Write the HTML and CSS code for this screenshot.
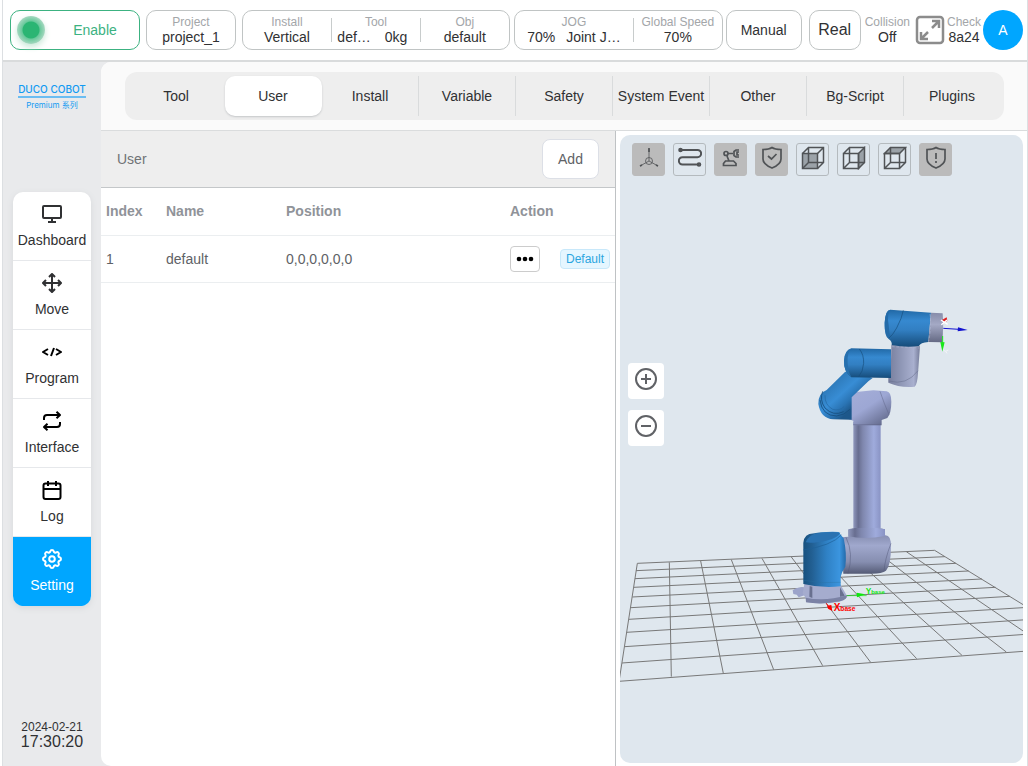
FILE: index.html
```html
<!DOCTYPE html>
<html lang="en">
<head>
  <meta charset="UTF-8">
  <title>DUCO COBOT</title>
  <link rel="stylesheet" href="styles.css">
</head>
<body>

<div class="app">
  <!-- Status bar -->
  <header class="topbar">
    <div class="group wide">
      <button type="button" class="box enable"><span class="lamp"></span><span class="enable-text">Enable</span></button>
      <div class="box project">
        <div class="cell"><span class="label">Project</span><span class="value">project_1</span></div>
      </div>
      <div class="box install">
        <div class="cell"><span class="label">Install</span><span class="value">Vertical</span></div>
        <div class="cell"><span class="label">Tool</span><span class="value pair"><span>def…</span><span>0kg</span></span></div>
        <div class="cell"><span class="label">Obj</span><span class="value">default</span></div>
      </div>
    </div>
    <div class="group jog-group">
      <div class="box jog">
        <div class="cell speed"><span class="label">JOG</span><span class="value pair"><span>70%</span><span>Joint J…</span></span></div>
        <div class="cell"><span class="label">Global Speed</span><span class="value">70%</span></div>
      </div>
      <button type="button" class="box manual">Manual</button>
    </div>
    <div class="group tail">
      <button type="button" class="box real">Real</button>
      <div class="cell plain"><span class="label">Collision</span><span class="value">Off</span></div>
      <button type="button" class="fullscreen" aria-label="Fullscreen">
        <svg width="30" height="30" viewBox="0 0 30 30" fill="none" stroke="#8c8c8c" stroke-width="2.500">
          <rect x="2" y="2" width="26" height="26" rx="3"/>
          <path d="M17 6h7v7M24 6l-7 7M6 17v7h7M6 24l7-7"/>
        </svg>
      </button>
      <div class="cell plain"><span class="label">Check</span><span class="value">8a24</span></div>
      <button type="button" class="avatar">A</button>
    </div>
  </header>

  <div class="body">
    <!-- Sidebar -->
    <aside class="sidebar">
      <div class="logo">
        <span class="brand">DUCO COBOT</span>
        <span class="series">Premium 系列</span>
      </div>
      <nav class="menu">
        <a href="#dashboard" class="menu-item">
          <svg class="icon" viewBox="0 0 20 20"><rect x="1" y="2" width="18" height="12" rx="1"/><path d="M10 14v4M6 18h8"/></svg>
          <span>Dashboard</span>
        </a>
        <a href="#move" class="menu-item">
          <svg class="icon" viewBox="0 0 20 20"><path d="M10 1v18M1 10h18M7 4l3-3 3 3M7 16l3 3 3-3M4 7l-3 3 3 3M16 7l3 3-3 3"/></svg>
          <span>Move</span>
        </a>
        <a href="#program" class="menu-item">
          <svg class="icon dark" viewBox="0 0 20 20"><path d="M6 7l-5 3 5 3M14 7l5 3-5 3M12 6l-3 8"/></svg>
          <span>Program</span>
        </a>
        <a href="#interface" class="menu-item">
          <svg class="icon dark" viewBox="0 0 20 20"><path d="M2 9V7a3 3 0 0 1 3-3h13M14.500 .8L18 4l-3.500 3.200M18 11v2a3 3 0 0 1-3 3H2M5.500 12.800L2 16l3.500 3.200"/></svg>
          <span>Interface</span>
        </a>
        <a href="#log" class="menu-item">
          <svg class="icon dark" viewBox="0 0 20 20"><rect x="1.500" y="3.500" width="17" height="15.500" rx="2"/><path d="M2 9h16M6 1v5M14 1v5"/></svg>
          <span>Log</span>
        </a>
        <a href="#setting" class="menu-item active">
          <svg class="icon" viewBox="2 2 20 20"><circle cx="12" cy="12" r="2.800"/><path d="M10.325 4.317c.426-1.756 2.924-1.756 3.350 0a1.724 1.724 0 0 0 2.573 1.066c1.543-.94 3.310.826 2.370 2.370a1.724 1.724 0 0 0 1.065 2.572c1.756.426 1.756 2.924 0 3.350a1.724 1.724 0 0 0-1.066 2.573c.94 1.543-.826 3.310-2.370 2.370a1.724 1.724 0 0 0-2.572 1.065c-.426 1.756-2.924 1.756-3.350 0a1.724 1.724 0 0 0-2.573-1.066c-1.543.94-3.310-.826-2.370-2.370a1.724 1.724 0 0 0-1.065-2.572c-1.756-.426-1.756-2.924 0-3.350a1.724 1.724 0 0 0 1.066-2.573c-.94-1.543.826-3.310 2.370-2.370 1 .608 2.296.07 2.572-1.065z"/></svg>
          <span>Setting</span>
        </a>
      </nav>
      <div class="clock">
        <span class="date">2024-02-21</span>
        <span class="time">17:30:20</span>
      </div>
    </aside>

    <main class="main">
      <div class="tabbar">
        <nav class="tabs">
          <a href="#tool" class="tab">Tool</a>
          <a href="#user" class="tab active">User</a>
          <a href="#install" class="tab">Install</a>
          <a href="#variable" class="tab">Variable</a>
          <a href="#safety" class="tab">Safety</a>
          <a href="#system-event" class="tab">System Event</a>
          <a href="#other" class="tab">Other</a>
          <a href="#bg-script" class="tab">Bg-Script</a>
          <a href="#plugins" class="tab">Plugins</a>
        </nav>
      </div>

      <div class="panels">
        <!-- User frames -->
        <section class="list-panel">
          <div class="panel-head">
            <span>User</span>
            <button type="button" class="add-btn">Add</button>
          </div>
          <table class="frames">
            <thead>
              <tr>
                <th class="col-index">Index</th>
                <th class="col-name">Name</th>
                <th>Position</th>
                <th class="col-action">Action</th>
              </tr>
            </thead>
            <tbody>
              <tr>
                <td>1</td>
                <td>default</td>
                <td>0,0,0,0,0,0</td>
                <td>
                  <div class="actions">
                    <button type="button" class="more-btn" aria-label="More">
                      <svg width="18" height="6" viewBox="0 0 18 6"><circle cx="3" cy="3" r="2.300"/><circle cx="9" cy="3" r="2.300"/><circle cx="15" cy="3" r="2.300"/></svg>
                    </button>
                    <span class="tag">Default</span>
                  </div>
                </td>
              </tr>
            </tbody>
          </table>
        </section>

        <!-- 3D view -->
        <section class="view-panel">
          <div class="scene">
            <svg class="robot" viewBox="0 0 403 628" preserveAspectRatio="xMidYMid slice">
              <defs>
                <linearGradient id="post"><stop offset="0" stop-color="#9098bd"/><stop offset=".18" stop-color="#686e90"/><stop offset=".35" stop-color="#7f87ae"/><stop offset=".75" stop-color="#9fabdc"/><stop offset="1" stop-color="#8993c4"/></linearGradient>
                <linearGradient id="elbow" x2=".8" y2="1"><stop offset="0" stop-color="#a5aed8"/><stop offset=".5" stop-color="#9da7d4"/><stop offset="1" stop-color="#636a8c"/></linearGradient>
                <linearGradient id="shoulder" x2="0" y2="1"><stop offset="0" stop-color="#737a9d"/><stop offset=".4" stop-color="#a0a8cd"/><stop offset=".75" stop-color="#868eb0"/><stop offset="1" stop-color="#555b76"/></linearGradient>
                <linearGradient id="wrist"><stop offset="0" stop-color="#777e9d"/><stop offset=".4" stop-color="#8f97b6"/><stop offset=".8" stop-color="#a9b0cf"/><stop offset="1" stop-color="#757c99"/></linearGradient>
                <linearGradient id="flange" x2="0" y2="1"><stop offset="0" stop-color="#878ca9"/><stop offset=".4" stop-color="#a4a9c5"/><stop offset="1" stop-color="#646983"/></linearGradient>
                <linearGradient id="blueDown" x2="0" y2="1"><stop offset="0" stop-color="#2168a5"/><stop offset=".3" stop-color="#3689d0"/><stop offset=".55" stop-color="#327fc2"/><stop offset="1" stop-color="#164c7a"/></linearGradient>
                <linearGradient id="blueAcross"><stop offset="0" stop-color="#17517f"/><stop offset=".2" stop-color="#225f92"/><stop offset=".55" stop-color="#2f81c5"/><stop offset=".85" stop-color="#3b95df"/><stop offset="1" stop-color="#236bab"/></linearGradient>
                <linearGradient id="link" x1=".2" y1=".3" x2=".65" y2=".75"><stop offset="0" stop-color="#2d79b9"/><stop offset=".45" stop-color="#388dd5"/><stop offset=".75" stop-color="#2a74b4"/><stop offset="1" stop-color="#1d578a"/></linearGradient>
              </defs>

              <!-- floor -->
              <g transform="translate(-20 395) scale(.3333)" fill="none" stroke="#777" stroke-width="3">
                <path d="M112 100L57 455M208 97L214 440M302 93L370 430M394 89L521 419M486 85L668 407M574 81L812 397M663 77L950 386M750 73L1086 376M835 69L1219 366M919 65L1349 357M1004 61L1473 349"/>
                <path d="M112 100L1004 61M108 122L1035 80M105 146L1068 100M102 172L1106 123M97 201L1146 147M93 233L1187 172M87 268L1230 199M80 307L1285 232M75 350L1340 265M66 399L1404 304M57 454L1473 349"/>
              </g>

              <g transform="translate(160 155) scale(.3333)">
                <!-- base and shoulder -->
                <g transform="translate(0 480)">
                  <path d="M185 262L205 260V239Q258 223 315 238V256Q334 255 333 290Q333 345 318 362Q305 372 270 371L190 371Z" fill="url(#shoulder)"/>
                  <path d="M205 238Q258 223 315 238V258Q255 270 205 259Z" fill="url(#post)"/>
                  <path d="M198 262Q222 310 204 371M333 280Q314 330 312 364" fill="none" stroke="#555c7b" stroke-width="1.500"/>
                  <path d="M38 421L48 415 66 411 78 414V434L56 442 50 434 40 432Z" fill="#9ca4ca"/>
                  <path d="M73 402L68 430 78 446V456Q125 465 178 455Q204 446 200 436L180 402Z" fill="#a5acce"/>
                  <path d="M77 443Q135 455 200 436Q204 448 180 454Q125 465 78 457Z" fill="#7b82a5"/>
                  <path d="M89 408L88 440 97 444V410ZM180 412V440L194 437Z" fill="#69708f"/>
                  <path d="M70 295Q67 258 88 252Q130 244 176 246Q185 258 191 265Q201 310 196 350Q185 366 182 380V409Q130 416 70 402Z" fill="url(#blueAcross)"/>
                  <path d="M77 277Q88 252 116 250Q160 243 181 248Q174 264 138 272Q98 281 77 277Z" fill="#2a72b1"/>
                  <path d="M70 300Q155 287 184 255" fill="none" stroke="#1d5f97" stroke-width="2"/>
                  <path d="M70 391Q125 402 182 397" fill="none" stroke="#2c6f9f" stroke-width="1"/>
                </g>
                <rect x="220" y="396" width="82" height="318" fill="url(#post)"/>
                <!-- elbow -->
                <path d="M206 308L280 301 320 304Q334 306 334 335Q334 370 322 384L305 390V406H220V392L206 388Z" fill="url(#elbow)"/>
                <path d="M220 404H303M300 304Q312 340 327 374" fill="none" stroke="#5f6687" stroke-width="1.500"/>
                <!-- forearm -->
                <path d="M195 246L140 300Q114 310 115 342Q122 386 160 388L215 389V322L265 274 278 264 214 240Z" fill="url(#link)"/>
                <path d="M120 330Q126 378 170 378Q193 376 210 358M128 304Q118 330 135 354Q160 380 191 365" fill="none" stroke="#174e7d" stroke-width="2.500"/>
                <path d="M135 316Q134 345 158 358Q178 364 192 350" fill="none" stroke="#2367a0" stroke-width="2"/>
                <!-- wrist -->
                <path d="M334 165L420 169 414 250Q412 285 404 290Q360 294 325 278V262H332Z" fill="url(#wrist)"/>
                <path d="M326 273Q380 288 414 242" fill="none" stroke="#646b89" stroke-width="1.500"/>
                <path d="M214 175L333 178V264L214 262Q191 245 192 212Q194 180 214 175Z" fill="url(#blueDown)"/>
                <path d="M214 176Q200 188 203 220Q205 248 214 261Q191 247 192 212Q194 180 214 176Z" fill="#2770ae"/>
                <path d="M238 177Q252 194 251 220Q249 246 236 260" fill="none" stroke="#174e7d" stroke-width="2"/>
                <path d="M331 59L453 68 445 156Q421 158 417 168Q376 173 335 165Q337 154 326 147Q313 139 314 98Q316 60 331 59Z" fill="url(#blueDown)"/>
                <path d="M331 59Q320 70 326 106Q327 130 333 148Q313 142 314 98Q316 60 331 59Z" fill="#246ba8"/>
                <path d="M370 61Q366 84 350 114 338 136 327 144" fill="none" stroke="#174e7d" stroke-width="2"/>
                <path d="M453 68L488 70Q492 112 486 157L445 156Z" fill="url(#flange)"/>
                <path d="M336 170L419 174M450 72Q455 110 446 154" fill="none" stroke="#b3bad7" stroke-width="1.500" stroke-dasharray="8 5"/>
                <!-- tool axes -->
                <path d="M490 115L537 118" stroke="#1212cf" stroke-width="3"/>
                <path d="M534 112L563 120 533 124Z" fill="#1212cf"/>
                <path d="M488 138V160" stroke="#18e818" stroke-width="3"/>
                <path d="M481 156L494 157 487 185Z" fill="#18e818"/>
                <path d="M487 89L500 82 502 92 493 99Z" fill="#e02020"/>
                <path d="M483 90L503 103M501 90L484 104" stroke="#fff" stroke-width="4"/>
                <path d="M491 181L497 184 505 180M497 184L501 190" stroke="#f3f5f7" stroke-width="3" fill="none"/>
                <!-- base axes -->
                <path d="M200 917H260" stroke="#0ee80e" stroke-width="2"/>
                <path d="M230 908L256 913 231 922Z" fill="#0ee80e"/>
                <path d="M139 940L145 949" stroke="#f00" stroke-width="3"/>
                <path d="M141 947L154 945 157 963 144 956Z" fill="#f00"/>
                <text class="axis" x="257" y="911" fill="#0ee80e" font-size="25">Y<tspan font-size="18">base</tspan></text>
                <text class="axis" x="161" y="964" fill="#f00" font-size="30">X<tspan font-size="20">base</tspan></text>
              </g>
            </svg>

            <div class="toolbar">
              <button type="button" class="tool on" aria-label="Axes">
                <svg viewBox="0 0 24 24" stroke-width=".8"><circle cx="12" cy="15" r="3.500"/><path d="M12 3v12l-9 5M12 15l9 5"/><path d="M12 2v4M3 20l2-1.100M21 20l-2-1.100" stroke-width="1.700"/></svg>
              </button>
              <button type="button" class="tool" aria-label="Path">
                <svg viewBox="0 0 24 24" stroke-width="2"><path d="M2 4h17.500a3.600 3.600 0 0 1 0 7.200H4.500a3.600 3.600 0 0 0 0 7.300H21"/><circle cx="2.500" cy="4" r="1.300"/><circle cx="21" cy="18.500" r="1.300"/></svg>
              </button>
              <button type="button" class="tool on" aria-label="Robot">
                <svg viewBox="0 0 24 24" stroke-width="1.700"><circle cx="7" cy="7.500" r="2"/><path d="M9 7.500h5M8 10l2 5M4.500 19.500v-2l2-2.500h8l2.500 2.500v2zM20 4h-3l-2 1.500v4L17 11h3M20 6h-2v3h2"/></svg>
              </button>
              <button type="button" class="tool on" aria-label="Safety">
                <svg viewBox="0 0 24 24" stroke-width="1.700"><path d="M12 1.500c3 2 6 2 9 2V13c0 4-4 7-9 9-5-2-9-5-9-9V3.500c3 0 6 0 9-2zM8 10l3.500 3L16.500 8"/></svg>
              </button>
              <button type="button" class="tool" aria-label="Front view">
                <svg viewBox="0 0 24 24" stroke-width="1.500"><path d="M1.500 7.500h15v15h-15z" fill="#9ba2a8"/><path d="M1.500 7.500l6-6h15v15l-6 6M16.500 7.500l6-6M7.500 1.500v15h15M1.500 22.500l6-6"/></svg>
              </button>
              <button type="button" class="tool" aria-label="Side view">
                <svg viewBox="0 0 24 24" stroke-width="1.500"><path d="M16.500 7.500l6-6v15l-6 6z" fill="#9ba2a8"/><path d="M1.500 7.500h15v15h-15zl6-6h15M7.500 1.500v15h15M1.500 22.500l6-6"/></svg>
              </button>
              <button type="button" class="tool" aria-label="Top view">
                <svg viewBox="0 0 24 24" stroke-width="1.500"><path d="M1.500 7.500l6-6h15l-6 6z" fill="#9ba2a8"/><path d="M1.500 7.500h15v15h-15zM22.500 1.500v15l-6 6M7.500 1.500v15h15M1.500 22.500l6-6"/></svg>
              </button>
              <button type="button" class="tool on" aria-label="Warning">
                <svg viewBox="0 0 24 24" stroke-width="1.700"><path d="M12 1.500c3 2 6 2 9 2V13c0 4-4 7-9 9-5-2-9-5-9-9V3.500c3 0 6 0 9-2zM12 7v6M12 15v2"/></svg>
              </button>
            </div>

            <div class="zoom">
              <button type="button" aria-label="Zoom in">
                <svg viewBox="0 0 24 24"><circle cx="12" cy="12" r="10"/><path d="M12 7v10M7 12h10"/></svg>
              </button>
              <button type="button" aria-label="Zoom out">
                <svg viewBox="0 0 24 24"><circle cx="12" cy="12" r="10"/><path d="M7 12h10"/></svg>
              </button>
            </div>
          </div>
        </section>
      </div>
    </main>
  </div>
</div>

</body>
</html>
```
FILE: styles.css
```css
* {
  box-sizing: border-box;
}
body {
  font-family: "Liberation Sans", Arial, "Noto Sans CJK SC", sans-serif;
  font-size: 14px;
  line-height: 16px;
  color: #303133;
  background: #fff;
  margin: 0;
}
button {
  font: inherit;
  color: inherit;
  padding: 0;
  cursor: pointer;
}
a {
  color: inherit;
  text-decoration: none;
}
.app {
  display: flex;
  flex-direction: column;
  min-height: 100vh;
  margin-left: 2px;
  border-left: 1px solid #dcdfe2;
  border-right: 1px solid #dcdfe2;
}

/* status bar */
.topbar {
  display: flex;
  gap: 4px;
  height: 62px;
  padding: 10px 4px 10px 7px;
  border-bottom: 2px solid #d9dbdc;
}
.group {
  display: flex;
  gap: 6px;
}
.wide {
  flex: 1 1 500px;
}
.jog-group {
  flex: 1 1 288px;
  gap: 3px;
}
.tail {
  flex: none;
  align-items: center;
  gap: 2px;
  padding-left: 3px;
}
.box {
  display: flex;
  align-items: center;
  justify-content: center;
  height: 40px;
  background: #fff;
  border: 1px solid #c0c4c4;
  border-radius: 10px;
}
.enable {
  width: 130px;
  padding: 0 6px;
  border-color: #3cb281;
  color: #3cb281;
}
.lamp {
  width: 28px;
  height: 28px;
  border-radius: 50%;
  background: radial-gradient(circle, #2bb573 0 8px, #68c99b 9px, #a5d8c0 14px);
  box-shadow: 0 3px 6px #c8e8d8;
}
.enable-text {
  flex: 1;
  padding-left: 12px;
  text-align: center;
}
.project {
  width: 90px;
}
.install, .jog {
  flex: 1;
}
.cell {
  display: flex;
  flex: 1 1 0;
  flex-direction: column;
  align-items: center;
  justify-content: center;
  min-width: 0;
  white-space: nowrap;
}
.cell + .cell {
  border-left: 1px solid #c8cccc;
  height: 24px;
}
.cell.plain {
  flex: none;
  border: 0;
}
.label {
  font-size: 12px;
  line-height: 14px;
  color: #a3a6a9;
}
.pair {
  display: flex;
  gap: 14px;
  padding-right: 7px;
}
.speed {
  flex-grow: 1.35;
}
.speed .pair {
  gap: 11px;
  padding-right: 0;
}
.manual {
  width: 76px;
}
.real {
  width: 52px;
  margin-right: 2px;
  font-size: 16px;
}
.fullscreen {
  width: 30px;
  height: 30px;
  margin-left: 3px;
  background: none;
  border: 0;
}
.fullscreen svg {
  display: block;
}
.avatar {
  width: 40px;
  height: 40px;
  border: 0;
  border-radius: 50%;
  background: #00a6ff;
  color: #fff;
}

/* sidebar */
.body {
  display: flex;
  flex: 1;
  background: #e9eaec;
}
.sidebar {
  display: flex;
  flex: none;
  flex-direction: column;
  width: 98px;
  padding: 0 10px 16px;
}
.logo {
  display: flex;
  flex-direction: column;
  align-items: center;
  height: 130px;
  padding-top: 21px;
  color: #129af2;
}
.brand {
  font-family: Inter, sans-serif;
  font-size: 10px;
  font-weight: 500;
  line-height: 13px;
  white-space: nowrap;
  border-bottom: 2px solid #6bbdf2;
}
.series {
  font-family: Inter, "Noto Sans CJK SC", sans-serif;
  font-size: 8px;
  line-height: 14px;
}
.menu {
  border-radius: 10px;
  background: #fff;
  box-shadow: 0 2px 6px #d5d8da;
  overflow: hidden;
}
.menu-item {
  display: flex;
  flex-direction: column;
  align-items: center;
  gap: 8px;
  height: 69px;
  padding-top: 12px;
  border-bottom: 1px solid #e6e8eb;
}
.menu-item.active {
  border-color: #00a6ff;
  background: #00a6ff;
  color: #fff;
}
.icon {
  flex: none;
  width: 20px;
  height: 20px;
  fill: none;
  stroke: currentColor;
  stroke-width: 2;
  stroke-linejoin: round;
}
.icon.dark {
  stroke: #000;
}
.clock {
  display: flex;
  flex-direction: column;
  align-items: center;
  margin-top: auto;
}
.date {
  font-size: 12px;
  line-height: 14px;
}
.time {
  font-size: 16px;
}

/* main */
.main {
  display: flex;
  flex: 1;
  flex-direction: column;
  min-width: 0;
  border-radius: 10px 0 0 10px;
  background: #fff;
  overflow: hidden;
}
.tabbar {
  padding: 10px 23px 10px 24px;
  border-bottom: 1px solid #dadcdd;
  background: #fafafa;
}
.tabs {
  display: flex;
  padding: 4px 3px;
  border-radius: 12px;
  background: #eee;
}
.tab {
  flex: 1 1 0;
  padding: 12px 0;
  border-right: 1px solid #d9dbdc;
  text-align: center;
  white-space: nowrap;
}
.tab:first-child, .tab:last-child {
  border-color: transparent;
}
.tab.active {
  border-color: transparent;
  border-radius: 10px;
  background: #fff;
  box-shadow: 0 1px 2px #c4c6c8;
}
.panels {
  display: grid;
  flex: 1;
  grid-template-columns: 515fr 411fr;
}
.list-panel {
  min-width: 0;
  border-right: 1px solid #bfc2c4;
}
.panel-head {
  display: flex;
  align-items: center;
  justify-content: space-between;
  height: 57px;
  padding: 0 16px;
  border-bottom: 1px solid #c4c7c9;
  background: #eee;
  color: #707376;
}
.add-btn {
  width: 57px;
  height: 40px;
  border: 1px solid #dcdfe6;
  border-radius: 8px;
  background: #fff;
  color: #606266;
}
.frames {
  width: 100%;
  border-collapse: collapse;
  table-layout: fixed;
  color: #606266;
}
th, td {
  height: 47px;
  padding: 0 5px;
  border-bottom: 1px solid #ebeef0;
  text-align: left;
}
th {
  color: #909399;
}
.col-index {
  width: 60px;
}
.col-name {
  width: 120px;
}
.col-action {
  width: 110px;
}
.actions {
  display: flex;
  align-items: center;
  justify-content: space-between;
}
.more-btn {
  display: flex;
  align-items: center;
  justify-content: center;
  width: 30px;
  height: 26px;
  border: 1px solid #ccc;
  border-radius: 4px;
  background: #fff;
}
.tag {
  padding: 1px 5px;
  border: 1px solid #c8e8fa;
  border-radius: 4px;
  background: #e5f6ff;
  color: #2aa5e0;
  font-size: 12px;
}

/* 3D view */
.view-panel {
  display: flex;
  min-width: 0;
  padding: 4px 4px 3px;
}
.scene {
  position: relative;
  flex: 1;
  border-radius: 10px;
  background: #dfe7ee;
  overflow: hidden;
}
.robot {
  position: absolute;
  width: 100%;
  height: 100%;
}
.axis {
  font-weight: bold;
}
.toolbar {
  position: absolute;
  top: 8px;
  left: 12px;
  display: flex;
  gap: 8px;
}
.tool {
  display: flex;
  align-items: center;
  justify-content: center;
  width: 33px;
  height: 33px;
  border: 1px solid #b4babe;
  border-radius: 3px;
  background: none;
}
.tool.on {
  border-color: #bbb;
  background: #bbb;
}
.tool svg {
  width: 24px;
  height: 24px;
  margin-bottom: 3px;
  fill: none;
  stroke: #505356;
}
.zoom {
  position: absolute;
  top: 228px;
  left: 8px;
  display: flex;
  flex-direction: column;
  gap: 11px;
}
.zoom button {
  display: flex;
  align-items: center;
  justify-content: center;
  width: 36px;
  height: 36px;
  padding-bottom: 4px;
  border: 0;
  border-radius: 4px;
  background: #fff;
}
.zoom svg {
  width: 24px;
  height: 24px;
  fill: none;
  stroke: #606266;
  stroke-width: 2;
}
```
